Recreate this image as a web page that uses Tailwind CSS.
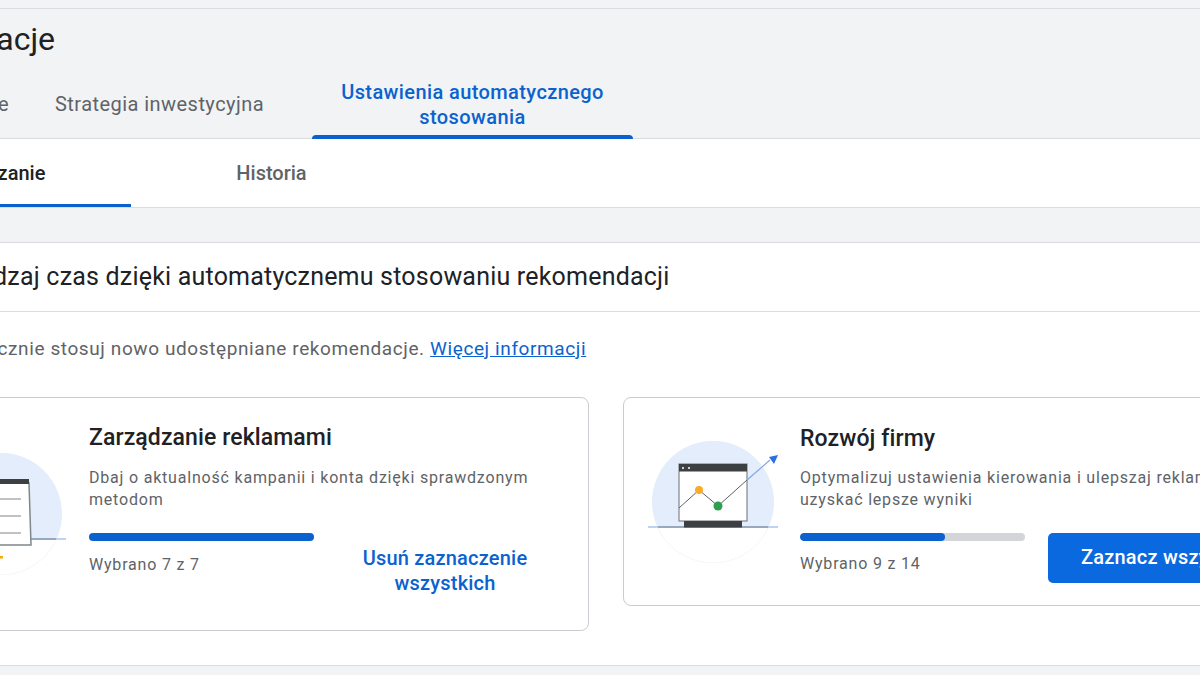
<!DOCTYPE html>
<html lang="pl">
<head>
    <meta charset="UTF-8">
    <title>Rekomendacje</title>
    <script src="https://cdn.jsdelivr.net/npm/@tailwindcss/browser@4"></script>
</head>
<body class="bg-[#f1f3f4] overflow-hidden font-['Roboto',sans-serif]">
<div class="w-[1200px] h-[675px] overflow-hidden">
    <div class="w-[1700px] -ml-[300px]">
        <div class="h-[8px]"></div>
        <div class="border-t border-[#dadce0] h-[61px] flex items-center">
            <div class="w-[355px] text-right text-[32px] leading-[40px] text-[#202124] -mt-[1px]">Rekomendacje</div>
        </div>
        <!-- main tabs -->
        <div class="flex items-center h-[70px] border-b border-[#dadce0] text-[20px] leading-[25px]">
            <div class="w-[309px] text-right text-[#5f6368] tracking-[0.45px] pt-[2px]">Informacje</div>
            <div class="ml-[46px] w-[257px] text-[#5f6368] tracking-[0.45px] pt-[2px]">Strategia inwestycyjna</div>
            <div class="w-[321px] h-[70px] relative text-center text-[#0b62cf] font-medium pt-[11px] tracking-[0.4px]">
                Ustawienia automatycznego<br>stosowania
                <div class="absolute left-0 right-0 bottom-0 h-[4px] bg-[#0b62cf] rounded-t-[4px]"></div>
            </div>
        </div>
        <!-- sub tabs -->
        <div class="bg-white h-[69px] border-b border-[#dadce0] flex pl-[150px] text-[20px]">
            <div class="w-[281px] h-[68px] relative flex items-center justify-center text-[#202124] font-medium">
                <span>Zarządzanie</span>
                <div class="absolute left-0 right-0 bottom-0 h-[3px] bg-[#0b62cf]"></div>
            </div>
            <div class="w-[281px] flex items-center justify-center text-[#5f6368] font-medium"><span>Historia</span></div>
        </div>
        <div class="h-[34px]"></div>
        <!-- panel -->
        <div class="bg-white border-y border-[#dadce0] h-[424px]">
            <div class="h-[69px] border-b border-[#dadce0] pl-[211px] flex items-center text-[25px] tracking-[0.2px] text-[#202124]">Oszczędzaj czas dzięki automatycznemu stosowaniu rekomendacji</div>
            <div class="pl-[211px] pt-[25px] text-[19px] leading-[24px] text-[#5f6368] tracking-[0.6px]">
                Automatycznie stosuj nowo udostępniane rekomendacje. <a class="text-[#0b62cf] underline" href="#">Więcej informacji</a>
            </div>
            <div class="flex items-start gap-[34px] pl-[211px] mt-[36px]">
                <!-- left card -->
                <div class="w-[678px] h-[234px] border border-[#c9ccd0] rounded-[8px] flex items-center pl-[24px] shrink-0">
                    <svg class="shrink-0 mr-[21px]" width="132" height="122" viewBox="0 0 132 122">
                        <path d="M9.4 86A61 61 0 1 1 120.6 86Z" fill="#e3edfb"/>
                        <path d="M9.4 86A61 61 0 0 0 120.6 86" fill="none" stroke="#f5f6f8"/>
                        <path d="M0 86H130" stroke="#a8c4ee" stroke-width="1.5"/>
                        <path d="M10 86H120" stroke="#8f9bab" stroke-width="1.5"/>
                        <path d="M36 30H93L95 92H36Z" fill="#fff" stroke="#80868b" stroke-width="1.5"/>
                        <rect x="36" y="26" width="57" height="5" fill="#3c4043"/>
                        <path d="M44 46H85M44 63H85M44 80H85" stroke="#80868b" stroke-width="1"/>
                        <rect x="56" y="103" width="11" height="2.5" fill="#f9ab00"/>
                    </svg>
                    <div class="w-[465px] shrink-0">
                        <div class="text-[23px] leading-[32px] tracking-[0.1px] text-[#202124] font-medium">Zarządzanie reklamami</div>
                        <div class="mt-[13px] text-[16px] leading-[22.5px] text-[#5f6368] tracking-[0.8px]">Dbaj o aktualność kampanii i konta dzięki sprawdzonym metodom</div>
                        <div class="flex gap-[23px] mt-[21px]">
                            <div class="w-[225px] shrink-0">
                                <div class="h-2 rounded-full bg-[#0b62cf]"></div>
                                <div class="mt-[13px] text-[16px] leading-[22px] text-[#5f6368] tracking-[0.8px]">Wybrano 7 z 7</div>
                            </div>
                            <button class="w-[216px] pt-[13px] pb-[11px] text-[20px] leading-[25px] font-medium text-[#0b62cf] text-center tracking-[0.2px]">Usuń zaznaczenie wszystkich</button>
                        </div>
                    </div>
                </div>
                <!-- right card -->
                <div class="w-[678px] h-[209px] border border-[#c9ccd0] rounded-[8px] flex items-center pl-[24px] shrink-0">
                    <svg class="shrink-0 mr-[20px]" width="132" height="122" viewBox="0 0 132 122">
                        <path d="M9.4 86A61 61 0 1 1 120.6 86Z" fill="#e3edfb"/>
                        <path d="M9.4 86A61 61 0 0 0 120.6 86" fill="none" stroke="#f5f6f8"/>
                        <path d="M0 86H130" stroke="#a8c4ee" stroke-width="1.5"/>
                        <path d="M10 86H120" stroke="#8f9bab" stroke-width="1.5"/>
                        <rect x="31" y="23" width="68" height="57" fill="#fff" stroke="#80868b" stroke-width="1.2"/>
                        <rect x="31" y="23" width="68" height="7.5" fill="#3c4043"/>
                        <circle cx="35" cy="27" r="1" fill="#fff"/>
                        <circle cx="41" cy="27" r="1" fill="#fff"/>
                        <rect x="36" y="80" width="58" height="6.5" fill="#3c4043"/>
                        <path d="M31 67L51 49L70 65L99 39" fill="none" stroke="#5f6368" stroke-width="1"/>
                        <path d="M99 39L122 19" fill="none" stroke="#7ea6e8" stroke-width="1.2"/>
                        <path d="M130 14L121 16L126 23Z" fill="#2a6fe0"/>
                        <circle cx="51" cy="49" r="4" fill="#f9ab2c"/>
                        <circle cx="70" cy="65" r="4.5" fill="#2f9e50"/>
                    </svg>
                    <div class="w-[466px] shrink-0 mt-[2px]">
                        <div class="text-[23px] leading-[32px] tracking-[0.1px] text-[#202124] font-medium">Rozwój firmy</div>
                        <div class="mt-[12px] text-[16px] leading-[22.5px] text-[#5f6368] tracking-[0.8px]">Optymalizuj ustawienia kierowania i ulepszaj reklamy, aby uzyskać lepsze wyniki</div>
                        <div class="flex gap-[23px] mt-[21px]">
                            <div class="w-[225px] shrink-0">
                                <div class="h-2 rounded-full bg-[#d3d5d9] overflow-hidden">
                                    <div class="h-2 rounded-full bg-[#0b62cf]" style="width:64.3%"></div>
                                </div>
                                <div class="mt-[12px] text-[16px] leading-[22px] text-[#5f6368] tracking-[0.8px]">Wybrano 9 z 14</div>
                            </div>
                            <button class="px-[33px] h-[50px] rounded-[5px] bg-[#0b69e0] text-[20px] leading-[25px] font-medium text-white text-center tracking-[0.2px] whitespace-nowrap">Zaznacz wszystkie</button>
                        </div>
                    </div>
                </div>
            </div>
        </div>
    </div>
</div>
</body>
</html>
